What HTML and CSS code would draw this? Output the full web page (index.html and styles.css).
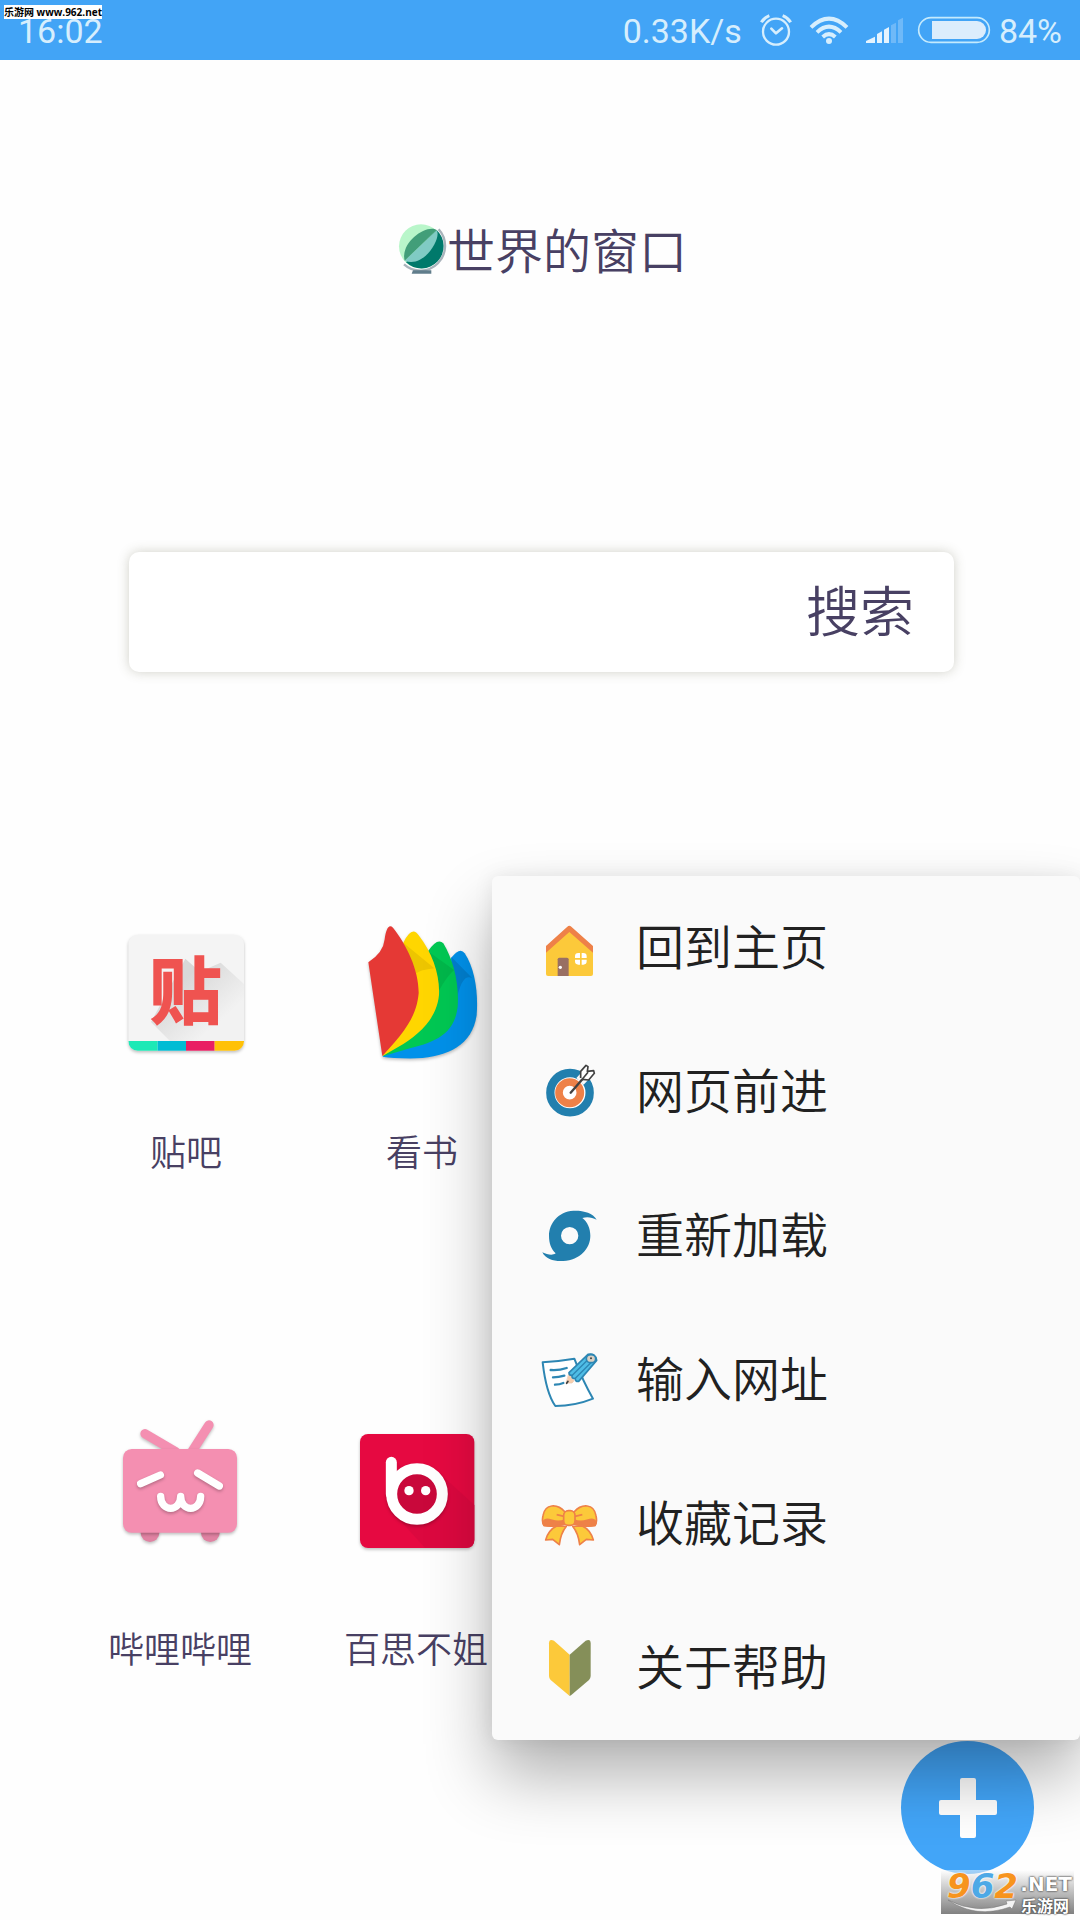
FILE: index.html
```html
<!DOCTYPE html>
<html lang="zh-CN">
<head>
<meta charset="utf-8">
<meta name="viewport" content="width=device-width, initial-scale=1">
<title>世界的窗口</title>
<link rel="stylesheet" href="styles.css">
</head>
<body>
<header class="status">
  <span class="status-text">16:02</span>
  <div class="status-right">
    <span class="status-text">0.33K/s</span>
    <svg class="alarm" viewBox="474 36 102 102" fill="none" stroke="#d6eefd" stroke-linecap="round" stroke-linejoin="round">
      <circle cx="525" cy="92" r="39" stroke-width="7"/>
      <path d="M511 83l14 14 18-15" stroke-width="8"/>
      <path d="M481 64q8-14 24-20M545 44q16 6 24 20" stroke-width="9" stroke-linecap="butt"/>
    </svg>
    <svg class="wifi" viewBox="624 45 120 87" fill="none" stroke="#d6eefd" stroke-width="12">
      <path d="M630 79q54-52 108 0M648 94q36-34 72 0M665 108q19-17 38 0"/>
      <circle cx="684" cy="120" r="9" fill="#d6eefd" stroke="none"/>
    </svg>
    <svg class="signal" viewBox="792 51 117 81">
      <path fill="#e4f3fe" d="M795 129v-6l27-13v19zM828 129v-27l15-8v35zM849 129v-40l15-8v48z"/>
      <path fill="#6fb9f8" d="M870 129v-53l15-8v61zM891 129v-68l15-8v76z"/>
    </svg>
    <svg class="battery" viewBox="948 48 222 84">
      <rect x="953" y="53" width="212" height="74" rx="37" fill="none" stroke="#c4eafd" stroke-width="5"/>
      <path fill="#dcedfc" d="M993 63h135a27 27 0 0 1 0 54H993z"/>
    </svg>
    <span class="status-text">84%</span>
  </div>
</header>
<div class="site-tag">乐游网 www.962.net</div>

<main class="home">
  <h1 class="title">
    <svg class="globe" viewBox="51 60 150 165">
      <path d="M176 82a74 74 0 0 1-104 105" fill="none" stroke="#a9b3bb" stroke-width="7"/>
      <path d="M99 205h55v10H95z" fill="#607d8b"/>
      <circle cx="123" cy="133" r="66" fill="#b9f6ca"/>
      <path d="M170 84a66 66 0 0 1-92 97z" fill="#00796b"/>
      <path d="M170 84C186 110 130 200 74 176z" fill="#80cbc4"/>
      <path d="M170 84C140 66 60 120 74 176z" fill="#429e79"/>
    </svg>
    <span class="title-text">世界的窗口</span>
  </h1>

  <form class="search">
    <input class="search-input" type="text" aria-label="搜索">
    <button class="search-button" type="button">搜索</button>
  </form>

  <nav class="apps">
    <div class="app-row">
      <a class="app" href="#">
        <svg class="app-icon" viewBox="42 60 432 432">
          <defs>
            <clipPath id="tile"><rect x="85" y="104" width="347" height="348" rx="28"/></clipPath>
            <linearGradient id="fade" x1="0" y1="0" x2="1" y2="1"><stop offset="0.3" stop-color="#d8d8d8"/><stop offset="0.75" stop-color="#f2f2f2"/></linearGradient>
          </defs>
          <rect class="lifted" x="85" y="104" width="347" height="348" rx="28" fill="#f4f4f4"/>
          <g clip-path="url(#tile)">
            <path d="M256 176L300 215 362 188 432 252V423H210L153 366z" fill="url(#fade)"/>
            <path fill="#1de9b6" d="M85 423h88v30H85z"/>
            <path fill="#00bcd4" d="M173 423h85v30h-85z"/>
            <path fill="#e91e63" d="M258 423h86v30h-86z"/>
            <path fill="#ffc107" d="M344 423h88v30h-88z"/>
          </g>
          <text class="tile-text" x="257" y="353" text-anchor="middle">贴</text>
        </svg>
        <span>贴吧</span>
      </a>
      <a class="app" href="#">
        <svg class="app-icon" viewBox="750 60 432 432">
          <g class="lifted">
            <path fill="#0091ea" d="M848 470L1055 172Q1080 140 1094 160C1125 205 1135 280 1130 345C1117 435 1045 470 950 475Q880 476 848 470z"/>
            <path fill="#007fcf" d="M1055 172L1117 235C1080 215 1070 300 1060 360z"/>
            <path fill="#00c853" d="M848 469L984 154Q1012 112 1030 130C1060 180 1078 250 1073 320C1064 400 1010 425 930 445z"/>
            <path fill="#00b84b" d="M984 154L1062 210Q1040 230 1018 270z"/>
            <path fill="#ffd600" d="M848 468L910 128Q936 75 956 106C998 160 1020 225 1017 285C1010 355 960 400 910 432z"/>
            <path fill="#edc500" d="M910 128L1003 205Q960 210 949 220z"/>
            <path fill="#e53935" d="M847 468L805 187Q850 158 854 118C858 88 866 70 879 83C920 135 957 210 956 280C950 345 920 390 847 468z"/>
          </g>
        </svg>
        <span>看书</span>
      </a>
    </div>
    <div class="app-row app-row-second">
      <a class="app" href="#">
        <svg class="app-icon" viewBox="54 51 432 432">
          <g class="lifted">
            <path d="M165 101l92 54M357 75l-50 78" stroke="#f48fb1" stroke-width="28" stroke-linecap="round"/>
            <circle cx="180" cy="398" r="28" fill="#e082a2"/>
            <circle cx="361" cy="398" r="28" fill="#e082a2"/>
          </g>
          <rect class="lifted" x="99" y="147" width="342" height="251" rx="26" fill="#f48fb1"/>
          <path class="lifted" d="M152 251l59-26M323 219l65 39M212 289c0 48 60 48 60 0c0 48 60 48 60 0" fill="none" stroke="#fff" stroke-width="22" stroke-linecap="round" stroke-linejoin="round"/>
        </svg>
        <span>哔哩哔哩</span>
      </a>
      <a class="app" href="#">
        <svg class="app-icon" viewBox="762 51 432 432">
          <rect class="lifted" x="810" y="102" width="343" height="342" rx="24" fill="#e60941"/>
          <path d="M918 183L942 208 1048 220 1153 315V420Q1153 443 1130 443H1005L920 350z" fill="#dc083f"/>
          <circle class="lifted" cx="981" cy="282" r="76" fill="#c9083b" stroke="#fff" stroke-width="33"/>
          <path d="M904 187v95" stroke="#fff" stroke-width="33" stroke-linecap="round"/>
          <circle cx="957" cy="272" r="14" fill="#fff"/>
          <circle cx="1007" cy="272" r="14" fill="#fff"/>
        </svg>
        <span>百思不姐</span>
      </a>
    </div>
  </nav>
</main>

<button class="fab" type="button" aria-label="菜单">
  <svg class="plus" viewBox="0 0 60 60"><path fill="#fff" d="M24 0h12q2 0 2 2v20h19q2 0 2 2v11q0 2-2 2H38v21q0 2-2 2H24q-2 0-2-2V37H3q-2 0-2-2V24q0-2 2-2h19V2q0-2 2-2z"/></svg>
</button>

<nav class="menu">
  <a class="menu-item" href="#">
    <svg class="menu-icon" viewBox="180 174 180 180">
      <path fill="#fcc93a" d="M198 270L268 208 339 270V342Q339 348 333 348H204Q198 348 198 342z"/>
      <path fill="#ee8148" d="M198 278V258L262 200Q268 195 274 200L339 258V278L268 216z"/>
      <path fill="#996f63" d="M233 348V298Q233 293 238 293H261Q266 293 266 298V348z"/>
      <circle cx="241" cy="322" r="5" fill="#fff"/>
      <path fill="#fff" d="M300 279v15h-15v-5q0-10 10-10zM305 279h5q10 0 10 10v5h-15zM285 299h15v15h-5q-10 0-10-10zM305 299h15v5q0 10-10 10h-5z"/>
    </svg>
    <span class="menu-label">回到主页</span>
  </a>
  <a class="menu-item" href="#">
    <svg class="menu-icon" viewBox="180 606 180 180">
      <circle cx="270" cy="698" r="59" fill="#fff" stroke="#227fae" stroke-width="25"/>
      <circle cx="269" cy="698" r="32" fill="#fff" stroke="#ee8148" stroke-width="23"/>
      <path d="M300 664L330 632" stroke="#fafafa" stroke-width="30"/>
      <path d="M272 698L324 638" stroke="#414141" stroke-width="7" stroke-linecap="round"/>
      <path d="M302 654V634L318 616L324 620L322 634L341 632L343 640L326 660L308 658" fill="#fff" stroke="#414141" stroke-width="5" stroke-linejoin="round"/>
      <path d="M303 662L324 637" stroke="#414141" stroke-width="5"/>
    </svg>
    <span class="menu-label">网页前进</span>
  </a>
  <a class="menu-item" href="#">
    <svg class="menu-icon" viewBox="60 48 180 180">
      <path fill="#227fae" fill-rule="evenodd" d="M230 89C218 68 190 61 160 62C115 65 87 100 87 137C87 160 94 178 107 190C96 198 82 193 67 187C77 208 104 215 130 213C180 210 211 175 211 137C211 115 202 95 187 84C202 79 216 82 230 89zM149 111A26 26 0 1 1 149 163A26 26 0 1 1 149 111z"/>
    </svg>
    <span class="menu-label">重新加载</span>
  </a>
  <a class="menu-item" href="#">
    <svg class="menu-icon" viewBox="60 480 180 180" fill="none" stroke="#2d86b3" stroke-linecap="round" stroke-linejoin="round">
      <path d="M68 517Q115 514 163 506C176 540 198 590 219 626Q165 648 106 648C86 620 74 570 68 517z" fill="#fff" stroke-width="6"/>
      <path d="M92 540q24 2 48-6M99 562q17 0 34-5M105 584q14 0 25-5" stroke-width="7"/>
      <path d="M147 552L162 572L156 579L139 579z" fill="#f7cfb0" stroke="#e8c4a7" stroke-width="2"/>
      <path d="M147 548L204 493Q226 488 230 511L176 574Q166 576 166 566Q154 566 156 556Q147 556 147 548z" fill="#4fbde6" stroke-width="5"/>
      <path d="M157 556L205 508M166 565L214 517" stroke-width="4"/>
      <ellipse cx="213" cy="506" rx="14" ry="12" fill="#d8d0c4" stroke-width="5"/>
      <circle cx="213" cy="505" r="3" fill="#414141" stroke="none"/>
      <path d="M140 580l4-6" stroke="#414141" stroke-width="5"/>
    </svg>
    <span class="menu-label">输入网址</span>
  </a>
  <a class="menu-item" href="#">
    <svg class="menu-icon" viewBox="60 42 180 180" fill="#fcc93a" stroke="#ee8148" stroke-width="5" stroke-linejoin="round">
      <path d="M110 138Q85 150 77 180L98 178L118 194Q122 160 139 139zM187 138Q212 150 220 180L199 178L179 194Q175 160 158 139z"/>
      <path d="M135 96C112 70 75 70 69 107C66 122 68 132 72 136Q105 142 135 132zM162 96C185 70 222 70 228 107C231 122 229 132 225 136Q192 142 162 132z"/>
      <path d="M72 136C66 116 80 116 96 121Q116 128 135 120V132Q105 142 72 136zM225 136C231 116 217 116 201 121Q181 128 162 120V132Q192 142 225 136z" fill="#ee8148"/>
      <path d="M110 104l22 5M187 104l-22 5"/>
      <rect x="131" y="92" width="34" height="44" rx="14"/>
    </svg>
    <span class="menu-label">收藏记录</span>
  </a>
  <a class="menu-item" href="#">
    <svg class="menu-icon" viewBox="60 474 180 180">
      <path fill="#fcc93a" d="M149 524L102 482Q87 475 87 490V588Q87 595 92 600L149 648z"/>
      <path fill="#858f59" d="M149 524L197 482Q212 475 212 490V588Q212 595 207 600L153 646 149 648z"/>
    </svg>
    <span class="menu-label">关于帮助</span>
  </a>
</nav>

<div class="brand">
  <svg class="swoosh" viewBox="0 0 133 44"><path d="M7 30Q35 45 66 34L65 31L75 30L71 39L69 37Q35 49 7 30z" fill="#f4f4f4" stroke="#777" stroke-width="0.5"/></svg>
  <span class="brand-number">9<span class="brand-blue">6</span>2</span>
  <span class="brand-net">.NET</span>
  <span class="brand-name">乐游网</span>
</div>
</body>
</html>
```
FILE: styles.css
```css
* {
  box-sizing: border-box;
}

body {
  position: relative;
  min-height: 100vh;
  margin: 0;
  overflow-x: hidden;
  background: #fefefe;
  color: #484063;
  font-family: "Noto Sans CJK SC", sans-serif;
  font-weight: 350;
}

a {
  color: inherit;
  text-decoration: none;
}

svg {
  display: block;
  flex: none;
}

/* Status bar */
.status {
  display: flex;
  align-items: center;
  justify-content: space-between;
  height: 60px;
  padding: 0 18px;
  background: #42a4f6;
}

.status-right {
  display: flex;
  align-items: center;
}

.status-text {
  padding-top: 2px;
  color: #d6eefd;
  font-family: Roboto, sans-serif;
  font-size: 34px;
  font-weight: 400;
  line-height: 58px;
}

.alarm {
  width: 34px;
  height: 34px;
  margin-left: 17px;
}

.wifi {
  width: 40px;
  height: 29px;
  margin-left: 16px;
}

.signal {
  width: 39px;
  height: 27px;
  margin-left: 16px;
}

.battery {
  width: 74px;
  height: 28px;
  margin: 0 8px 0 13px;
}

.site-tag {
  position: absolute;
  top: 5px;
  left: 4px;
  width: 98px;
  height: 14px;
  background: #fff;
  color: #000;
  font: 700 10px/15px "Open Sans", "Noto Sans CJK SC", sans-serif;
  text-align: center;
  white-space: nowrap;
}

/* Home page */
.title {
  display: flex;
  align-items: center;
  justify-content: center;
  margin: 152px 0 0;
  padding-left: 4px;
  font-size: 48px;
  font-weight: 350;
  line-height: 72px;
}

.title-text {
  padding-bottom: 2px;
}

.globe {
  width: 50px;
  height: 55px;
}

.search {
  display: flex;
  height: 120px;
  margin: 266px 126px 0 129px;
  border-radius: 10px;
  background: #fff;
  box-shadow: 0 0 12px rgba(90, 90, 60, 0.28);
}

.search-input {
  flex: 1;
  min-width: 0;
  padding: 0 32px;
  border: 0;
  outline: 0;
  background: transparent;
  color: inherit;
  font: inherit;
  font-size: 48px;
}

.search-button {
  padding: 0 40px 8px;
  border: 0;
  background: transparent;
  color: inherit;
  font: inherit;
  font-size: 54px;
}

.apps {
  display: grid;
  gap: 239px;
  padding: 248px 0 120px;
}

.app-row {
  display: flex;
  padding-left: 68px;
}

.app-row-second {
  padding-left: 62px;
}

.app {
  display: flex;
  flex-direction: column;
  align-items: center;
  gap: 58px;
  width: 236px;
  font-size: 36px;
  line-height: 56px;
}

.app-icon {
  width: 144px;
  height: 144px;
}

.lifted {
  filter: drop-shadow(0 5px 4px rgba(0, 0, 0, 0.25));
}

.tile-text {
  fill: #ef5350;
  font-size: 218px;
  font-weight: 900;
}

/* Popup menu */
.menu {
  position: absolute;
  top: 876px;
  right: 0;
  width: 588px;
  border-radius: 6px;
  background: #fafafa;
  box-shadow: 0 36px 66px rgba(0, 0, 0, 0.3), 0 0 20px rgba(0, 0, 0, 0.08);
  color: #212121;
}

.menu-item {
  display: flex;
  align-items: center;
  gap: 36px;
  height: 144px;
  padding-left: 48px;
  font-size: 48px;
  line-height: 72px;
}

.menu-label {
  padding-bottom: 8px;
}

.menu-icon {
  width: 60px;
  height: 60px;
}

.fab {
  position: absolute;
  top: 1741px;
  right: 46px;
  display: grid;
  place-items: center;
  width: 133px;
  height: 133px;
  padding: 0;
  border: 0;
  border-radius: 50%;
  background: #42a5f8;
}

.plus {
  width: 60px;
  height: 60px;
}

/* Site badge in the corner */
.brand {
  position: absolute;
  top: 1870px;
  right: 6px;
  width: 133px;
  height: 44px;
  background: linear-gradient(rgba(255, 255, 255, 0.5), #808080);
  color: #fff;
  white-space: nowrap;
}

.brand-number,
.brand-net,
.brand-name,
.swoosh {
  position: absolute;
}

.swoosh {
  inset: 0;
}

.brand-number {
  top: 0;
  left: 6px;
  color: #f7941e;
  font: italic 700 34px/32px "DejaVu Sans", sans-serif;
  text-shadow: 0 0 2px #fff, 0 0 2px #fff;
}

.brand-blue {
  color: #4da9e6;
}

.brand-net {
  top: 3px;
  right: 2px;
  font: 700 20px/22px "DejaVu Sans", sans-serif;
  text-shadow: 0 0 2px #444, 0 0 2px #444;
}

.brand-name {
  right: 5px;
  bottom: 0;
  font-size: 16px;
  font-weight: 700;
  line-height: 18px;
  text-shadow: 0 0 2px #444, 0 0 2px #444;
}
```
